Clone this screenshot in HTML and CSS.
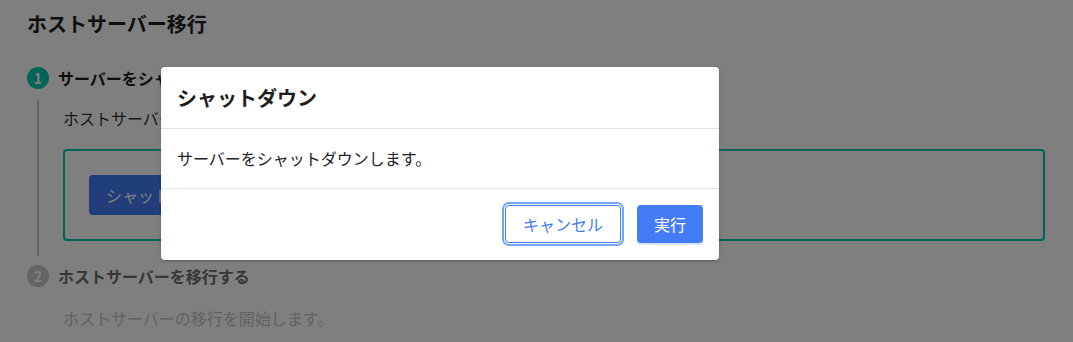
FILE: index.html
```html
<!DOCTYPE html>
<html lang="ja">
<head>
<meta charset="utf-8">
<link rel="stylesheet" href="styles.css">
</head>
<body>
<div class="page">
  <h1 class="title">ホストサーバー移行</h1>
  <div class="step">
    <div class="step-head">
      <span class="num active">1</span>
      <span class="step-label">サーバーをシャットダウンする</span>
    </div>
    <div class="step-body with-line">
      <p class="desc">ホストサーバーをシャットダウンします。</p>
      <div class="box">
        <button class="btn primary">シャットダウン</button>
      </div>
    </div>
  </div>
  <div class="step">
    <div class="step-head">
      <span class="num">2</span>
      <span class="step-label muted">ホストサーバーを移行する</span>
    </div>
    <div class="step-body last">
      <p class="desc muted-light">ホストサーバーの移行を開始します。</p>
    </div>
  </div>
</div>
<div class="overlay">
  <div class="dialog">
    <div class="dialog-head">シャットダウン</div>
    <div class="dialog-body">サーバーをシャットダウンします。</div>
    <div class="dialog-foot">
      <button class="btn outline focus">キャンセル</button>
      <button class="btn primary small">実行</button>
    </div>
  </div>
</div>
</body>
</html>
```
FILE: styles.css
```css
* { box-sizing: border-box; }
html, body { margin: 0; padding: 0; background: #fff; }
body {
  font-family: "Noto Sans CJK JP", "Noto Sans", sans-serif;
  color: #222;
  width: 1073px;
  height: 342px;
  overflow: hidden;
  position: relative;
}
.page { padding: 12px 26px 0 27px; }
.title {
  margin: 0;
  font-size: 20px;
  line-height: 24px;
  font-weight: 700;
  color: #1e1e1e;
}
.step:first-of-type { margin-top: 31px; }
.step-head {
  display: flex;
  align-items: center;
  gap: 9px;
  height: 22px;
}
.num {
  width: 22px;
  height: 22px;
  border-radius: 50%;
  background: #c8c8c8;
  color: #fff;
  font-size: 14px;
  font-weight: 700;
  display: flex;
  align-items: center;
  justify-content: center;
  line-height: 1;
}
.num.active { background: #00c8b0; }
.step-label {
  font-size: 16px;
  font-weight: 700;
  color: #1e1e1e;
}
.step-label.muted { color: #6e6e6e; }
.step-body { margin-left: 10px; }
.step-body.with-line {
  margin-top: 11px;
  border-left: 2px solid #c8c8c8;
  padding: 6px 0 15px 24px;
}
.step-body.last { margin-top: 19px; padding-left: 26px; }
.step + .step { margin-top: 9px; }
.desc {
  margin: 0;
  font-size: 16px;
  line-height: 24px;
  color: #333;
}
.desc.muted-light { color: #c4c4c4; }
.box {
  margin-top: 19px;
  width: 982px;
  border: 2px solid #00c8b0;
  border-radius: 4px;
  padding: 24px;
}
.btn {
  font-family: inherit;
  font-size: 16px;
  border-radius: 4px;
  cursor: pointer;
  height: 40px;
  padding: 0 17px;
}
.btn.primary {
  background: #437cf6;
  color: #fff;
  border: none;
}
.btn.small { height: 38px; box-shadow: 0 2px 0 #dbe6fd; }
.btn.outline {
  height: 38px;
  background: #fff;
  color: #437cf6;
  border: 1px solid #437cf6;
}
.btn.focus {
  box-shadow: 0 0 0 1px #fff, 0 0 0 3px #6fa6f8;
}
.overlay {
  position: absolute;
  inset: 0;
  background: rgba(0, 0, 0, 0.5);
}
.dialog {
  position: absolute;
  left: 161px;
  top: 67px;
  width: 558px;
  background: #fff;
  border-radius: 4px;
  box-shadow: 0 1px 3px rgba(0, 0, 0, 0.25);
}
.dialog-head {
  height: 62px;
  display: flex;
  align-items: center;
  padding: 0 16px;
  font-size: 20px;
  font-weight: 700;
  color: #1e1e1e;
  border-bottom: 1px solid #e2e2e2;
}
.dialog-body {
  padding: 16px;
  font-size: 16px;
  line-height: 27px;
  color: #222;
  border-bottom: 1px solid #e2e2e2;
}
.dialog-foot {
  display: flex;
  justify-content: flex-end;
  gap: 16px;
  padding: 16px 16px 17px;
}
```
